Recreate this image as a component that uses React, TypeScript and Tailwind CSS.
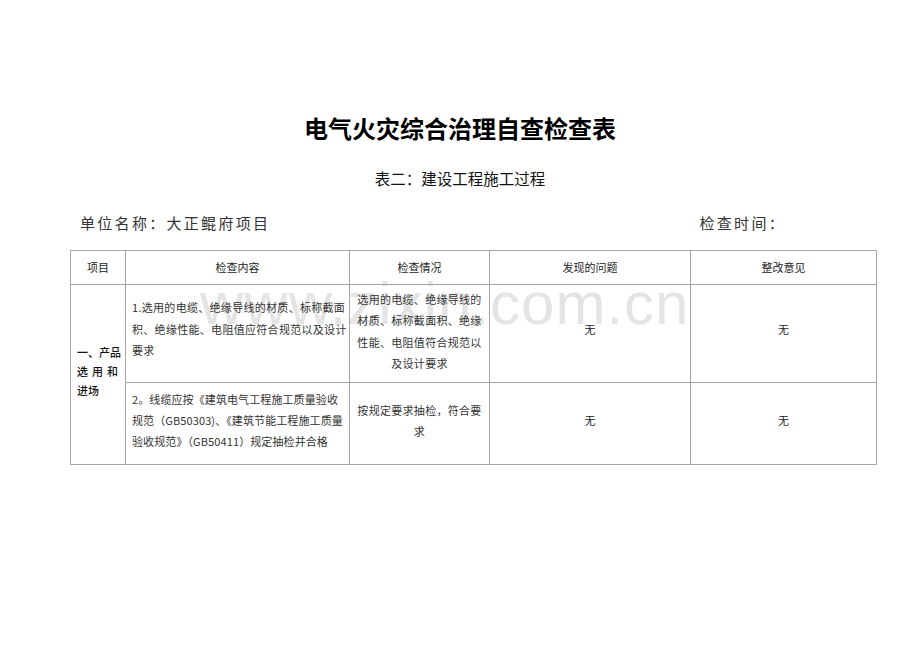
import React from "react";

const FONT = { fontFamily: '"Noto Sans CJK SC", "Noto Sans", sans-serif' };

export default function App() {
  const b = "border border-[#a6a6a6]";
  return (
    <div className="relative w-[920px] h-[651px] bg-white overflow-hidden" style={FONT}>
      <div
        aria-hidden="true"
        className="absolute left-[200px] top-[274px] z-0 text-[60px] leading-none tracking-[1px] text-[#e4e4e4] whitespace-nowrap pointer-events-none select-none"
        style={{ fontFamily: '"Liberation Sans", Arial, sans-serif' }}
      >
        www.zixin.com.cn
      </div>

      <div className="relative z-10 flex flex-col pt-[114px]">
        <h1 className="text-center text-[24px] leading-[28px] font-bold text-black">
          电气火灾综合治理自查检查表
        </h1>
        <div className="mt-[26px] text-center text-[15.5px] leading-[20px] text-[#111]">
          表二：建设工程施工过程
        </div>
        <div className="mt-[25px] flex text-[15px] leading-[20px] tracking-[2.3px] text-[#333]">
          <span className="ml-[80px]">单位名称：大正鲲府项目</span>
          <span className="ml-auto mr-[134px]">检查时间：</span>
        </div>

        <table className="mt-[17px] ml-[70px] w-[806px] border-collapse table-fixed text-[11px] text-[#222]">
          <colgroup>
            <col className="w-[55px]" />
            <col className="w-[224px]" />
            <col className="w-[140px]" />
            <col className="w-[201px]" />
            <col className="w-[186px]" />
          </colgroup>
          <tbody>
            <tr className="h-[34px]">
              <td className={`${b} text-center`}>项目</td>
              <td className={`${b} text-center`}>检查内容</td>
              <td className={`${b} text-center`}>检查情况</td>
              <td className={`${b} text-center`}>发现的问题</td>
              <td className={`${b} text-center`}>整改意见</td>
            </tr>
            <tr className="h-[98px]">
              <td rowSpan={2} className={`${b} align-middle px-[6px]`}>
                <div className="flex flex-col w-[41px] leading-[19px] font-medium text-[#111] pb-[6px]">
                  <span className="whitespace-nowrap">一、产品</span>
                  <span className="flex justify-between">
                    <span>选</span>
                    <span>用</span>
                    <span>和</span>
                  </span>
                  <span>进场</span>
                </div>
              </td>
              <td className={`${b} align-middle pl-[6px] pr-[2px]`}>
                <div className="leading-[21.5px] tracking-[0.3px] whitespace-nowrap text-[#333] pb-[8px]">
                  1.选用的电缆、绝缘导线的材质、标称截面
                  <br />
                  积、绝缘性能、电阻值应符合规范以及设计
                  <br />
                  要求
                </div>
              </td>
              <td className={`${b} align-middle text-center px-[2px]`}>
                <div className="leading-[21.5px] tracking-[0.3px] whitespace-nowrap text-[#333] pb-[4px]">
                  选用的电缆、绝缘导线的
                  <br />
                  材质、标称截面积、绝缘
                  <br />
                  性能、电阻值符合规范以
                  <br />
                  及设计要求
                </div>
              </td>
              <td className={`${b} align-middle text-center`}>
                <span className="relative top-[-4px]">无</span>
              </td>
              <td className={`${b} align-middle text-center`}>
                <span className="relative top-[-4px]">无</span>
              </td>
            </tr>
            <tr className="h-[82px]">
              <td className={`${b} align-middle pl-[6px] pr-[2px]`}>
                <div className="leading-[21px] tracking-[0.1px] whitespace-nowrap text-[#333] pb-[6px]">
                  2。线缆应按《建筑电气工程施工质量验收
                  <br />
                  规范（GB50303)、《建筑节能工程施工质量
                  <br />
                  验收规范》（GB50411）规定抽检并合格
                </div>
              </td>
              <td className={`${b} align-middle text-center px-[2px]`}>
                <div className="leading-[21px] tracking-[0.3px] whitespace-nowrap text-[#333] pb-[6px]">
                  按规定要求抽检，符合要
                  <br />
                  求
                </div>
              </td>
              <td className={`${b} align-middle text-center`}>
                <span className="relative top-[-3px]">无</span>
              </td>
              <td className={`${b} align-middle text-center`}>
                <span className="relative top-[-3px]">无</span>
              </td>
            </tr>
          </tbody>
        </table>
      </div>
    </div>
  );
}
